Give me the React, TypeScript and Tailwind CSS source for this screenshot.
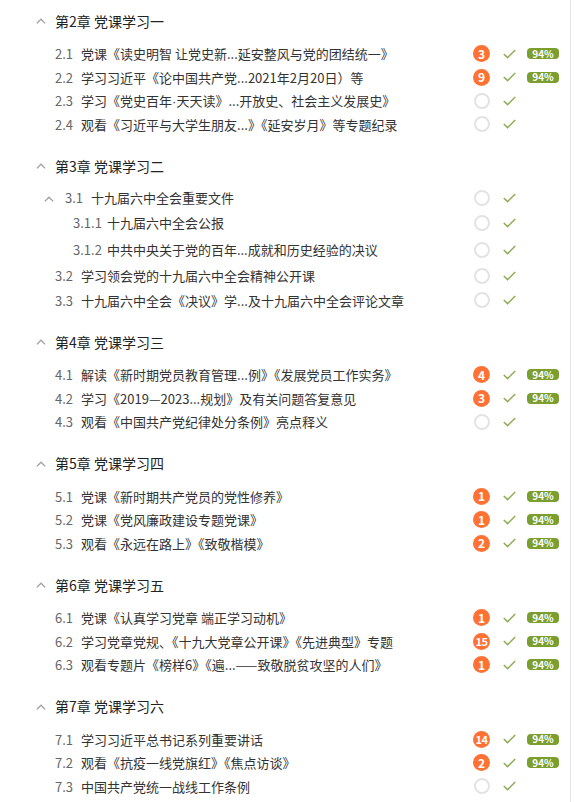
import React from "react"

type Item = {
  no: string
  title: React.ReactNode
  level?: 1 | 2 | 3
  badge?: number
  pct?: boolean
  h?: string
}

type Chapter = {
  title: string
  items: Item[]
  pt?: string
}

const chapters: Chapter[] = [
  {
    title: "第2章 党课学习一",
    items: [
      { no: "2.1", title: "党课《读史明智 让党史新...延安整风与党的团结统一》", badge: 3, pct: true },
      { no: "2.2", title: "学习习近平《论中国共产党...2021年2月20日）等", badge: 9, pct: true },
      {
        no: "2.3",
        title: (
          <>
            学习《党史百年<span className="font-['Liberation_Sans']">·</span>天天读》...开放史、社会主义发展史》
          </>
        ),
      },
      { no: "2.4", title: "观看《习近平与大学生朋友...》《延安岁月》等专题纪录" },
    ],
  },
  {
    title: "第3章 党课学习二",
    pt: "pt-[3px]",
    items: [
      { no: "3.1", title: "十九届六中全会重要文件", level: 2 },
      { no: "3.1.1", title: "十九届六中全会公报", level: 3, h: "h-[26.5px]" },
      { no: "3.1.2", title: "中共中央关于党的百年...成就和历史经验的决议", level: 3, h: "h-[27px]" },
      { no: "3.2", title: "学习领会党的十九届六中全会精神公开课", h: "h-[25.5px]" },
      { no: "3.3", title: "十九届六中全会《决议》学...及十九届六中全会评论文章" },
    ],
  },
  {
    title: "第4章 党课学习三",
    items: [
      { no: "4.1", title: "解读《新时期党员教育管理...例》《发展党员工作实务》", badge: 4, pct: true },
      { no: "4.2", title: "学习《2019—2023...规划》及有关问题答复意见", badge: 3, pct: true },
      { no: "4.3", title: "观看《中国共产党纪律处分条例》亮点释义" },
    ],
  },
  {
    title: "第5章 党课学习四",
    items: [
      { no: "5.1", title: "党课《新时期共产党员的党性修养》", badge: 1, pct: true },
      { no: "5.2", title: "党课《党风廉政建设专题党课》", badge: 1, pct: true },
      { no: "5.3", title: "观看《永远在路上》《致敬楷模》", badge: 2, pct: true },
    ],
  },
  {
    title: "第6章 党课学习五",
    items: [
      { no: "6.1", title: "党课《认真学习党章 端正学习动机》", badge: 1, pct: true },
      { no: "6.2", title: "学习党章党规、《十九大党章公开课》《先进典型》专题", badge: 15, pct: true },
      { no: "6.3", title: "观看专题片《榜样6》《遍...——致敬脱贫攻坚的人们》", badge: 1, pct: true },
    ],
  },
  {
    title: "第7章 党课学习六",
    items: [
      { no: "7.1", title: "学习习近平总书记系列重要讲话", badge: 14, pct: true },
      { no: "7.2", title: "观看《抗疫一线党旗红》《焦点访谈》", badge: 2, pct: true },
      { no: "7.3", title: "中国共产党统一战线工作条例" },
    ],
  },
]

function Chevron({ className }: { className?: string }) {
  return (
    <svg width="10" height="6" viewBox="0 0 10 6" className={className} fill="none">
      <path d="M0.8 5.4 L5 1.2 L9.2 5.4" stroke="#a0a0a0" strokeWidth="1.3" />
    </svg>
  )
}

function Check() {
  return (
    <svg width="13" height="10" viewBox="0 0 13 10" fill="none">
      <path d="M0.8 5 L4.6 8.6 L12.2 1" stroke="#8fad55" strokeWidth="1.5" />
    </svg>
  )
}

function Row({ item }: { item: Item }) {
  const level = item.level ?? 1
  return (
    <div className={`flex items-center ${item.h ?? "h-[23.5px]"}`}>
      {level === 1 && (
        <div className="flex min-w-0 flex-1 items-center pl-[55px]">
          <span className="mr-[8px] text-[#666]">{item.no}</span>
          <span className="truncate text-[#333]">{item.title}</span>
        </div>
      )}
      {level === 2 && (
        <div className="flex min-w-0 flex-1 items-center pl-[44px]">
          <Chevron className="mr-[11px] mt-[2px]" />
          <span className="mr-[8px] text-[#666]">{item.no}</span>
          <span className="truncate text-[#333]">{item.title}</span>
        </div>
      )}
      {level === 3 && (
        <div className="flex min-w-0 flex-1 items-center pl-[73px]">
          <span className="mr-[5px] text-[#666]">{item.no}</span>
          <span className="truncate text-[#333]">{item.title}</span>
        </div>
      )}
      <div className="flex shrink-0 items-center">
        <div className="flex w-[17px] justify-center">
          {item.badge ? (
            <span
              className={`flex h-[17px] w-[17px] items-center justify-center rounded-full bg-[#ff7234] font-bold leading-none text-white ${
                item.badge > 9 ? "text-[11px] tracking-[-0.5px]" : "text-[12px]"
              }`}
            >
              {item.badge}
            </span>
          ) : (
            <span className="h-[16px] w-[16px] rounded-full border-2 border-[#e3e3e3]" />
          )}
        </div>
        <div className="ml-[13px] flex w-[13px] justify-center">
          <Check />
        </div>
        <div className="ml-[11px] w-[32px]">
          {item.pct && (
            <span className="flex h-[11px] w-[32px] items-center justify-center rounded-[4px] bg-[#7b9e2f] text-[10px] font-bold leading-none text-white">
              94%
            </span>
          )}
        </div>
      </div>
    </div>
  )
}

export default function App() {
  return (
    <div
      className="min-h-[802px] w-[571px] border-r border-[#e8e8e8] bg-white pr-[11px] pt-[4px] text-[13px]"
      style={{ fontFamily: '"Noto Sans CJK SC", "Noto Sans", sans-serif' }}
    >
      {chapters.map((ch) => (
        <section key={ch.title} className="pb-[13px]">
          <div className="flex h-[34px] items-center pl-[36px]">
            <Chevron className="mr-[9px]" />
            <span className="text-[14px] text-[#222]">{ch.title}</span>
          </div>
          <div className={ch.pt ?? "pt-[4px]"}>
            {ch.items.map((it) => (
              <Row key={it.no} item={it} />
            ))}
          </div>
        </section>
      ))}
    </div>
  )
}
